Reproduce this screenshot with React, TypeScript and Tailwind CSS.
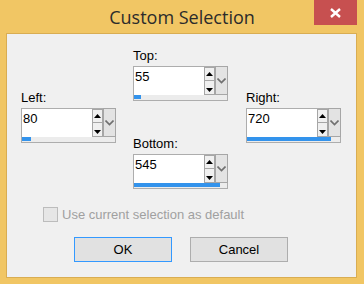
import React from "react";

function SpinBox({ label, value, fill }: { label: string; value: string; fill: number }) {
  return (
    <div className="flex flex-col w-[95px]">
      <div className="h-[15px] leading-[15px] text-[13px] text-black mb-[3px]">{label}</div>
      <div className="w-[95px] h-[35px] border border-[#adadad] flex flex-col bg-[#ececec]">
        <div className="h-[28px] flex">
          <div className="flex-1 bg-white pl-[1px] text-[13px] leading-[20px] text-black">{value}</div>
          <div className="w-[11px] flex flex-col bg-[#f0f0f0]">
            <div className="h-[14px] border border-[#a6a6a6] flex items-center justify-center">
              <svg width="7" height="4" viewBox="0 0 7 4">
                <polygon points="0,4 7,4 3.5,0" fill="#000" />
              </svg>
            </div>
            <div className="flex-1 border-x border-b border-[#a6a6a6] flex items-end justify-center pb-[2px]">
              <svg width="7" height="4" viewBox="0 0 7 4">
                <polygon points="0,0 7,0 3.5,4" fill="#000" />
              </svg>
            </div>
          </div>
          <div className="w-[13px] h-[29px] bg-[#e3e3e3] border border-[#a6a6a6] -mt-[1px] -mr-[1px] flex items-center justify-center">
            <svg width="9" height="6" viewBox="0 0 9 6">
              <polyline points="0.5,0.5 4.5,4.5 8.5,0.5" fill="none" stroke="#707070" strokeWidth="1.6" />
            </svg>
          </div>
        </div>
        <div className="flex-1">
          <div className="h-[4px] bg-[#3393ec]" style={{ width: fill }} />
        </div>
      </div>
    </div>
  );
}

export default function App() {
  return (
    <div
      className="w-[364px] h-[284px] bg-[#f1c664] flex flex-col overflow-hidden"
      style={{ fontFamily: '"Liberation Sans", Arial, sans-serif' }}
    >
      <div className="h-[33px] relative flex justify-center">
        <div
          className="text-[18px] leading-[33px] text-[#2b2b2b] mt-[1px]"
          style={{ fontFamily: '"Open Sans", "Noto Sans", sans-serif' }}
        >
          Custom Selection
        </div>
        <div className="absolute top-0 right-[7px] w-[43px] h-[25px] bg-[#c75050] flex items-center justify-center">
          <svg width="11" height="10" viewBox="0 0 11 10">
            <path d="M1 1 L10 9 M10 1 L1 9" stroke="#fff" strokeWidth="2.4" />
          </svg>
        </div>
      </div>
      <div className="ml-[6px] mr-[7px] h-[245px] border border-[#d9ad52] bg-[#f0f0f0] flex flex-col">
        <div className="flex pl-[14px] pt-[14px] gap-[17px]">
          <div className="mt-[42px]">
            <SpinBox label="Left:" value="80" fill={9} />
          </div>
          <div className="flex flex-col gap-[35px]">
            <SpinBox label="Top:" value="55" fill={7} />
            <SpinBox label="Bottom:" value="545" fill={86} />
          </div>
          <div className="mt-[42px] ml-[1px]">
            <SpinBox label="Right:" value="720" fill={84} />
          </div>
        </div>
        <div className="flex items-center mt-[18px] ml-[36px] h-[15px]">
          <div className="w-[15px] h-[15px] border border-[#bcbcbc] bg-[#e6e6e6]" />
          <div className="ml-[4px] text-[13px] leading-[15px] text-[#a0a0a0]">Use current selection as default</div>
        </div>
        <div className="flex mt-[15px] ml-[67px] gap-[18px]">
          <div className="w-[98px] h-[25px] bg-[#e1e1e1] border border-[#3399ff] flex items-center justify-center text-[13px] text-black">
            OK
          </div>
          <div className="w-[98px] h-[25px] bg-[#e1e1e1] border border-[#adadad] flex items-center justify-center text-[13px] text-black">
            Cancel
          </div>
        </div>
      </div>
    </div>
  );
}
